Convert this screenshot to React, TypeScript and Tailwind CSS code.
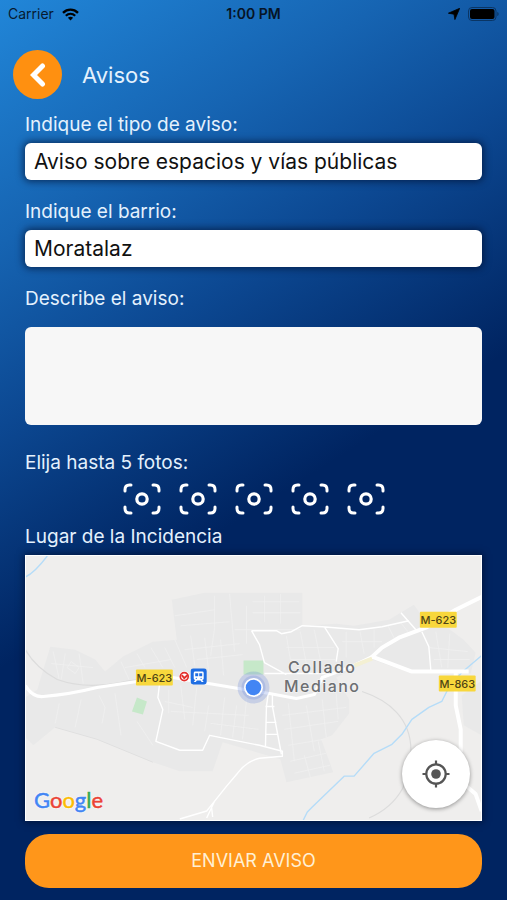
import { useState } from "react";

const photoSlots = [1, 2, 3, 4, 5];

function StatusBar() {
  return (
    <div className="grid h-7 grid-cols-3 items-center px-2 text-sm text-[#071a30]">
      <div className="flex items-center gap-2">
        <span>Carrier</span>
        <svg width="17" height="13" viewBox="0 0 17 13" fill="none" stroke="#000" aria-hidden="true">
          <path d="M1 4.8C5.4 0.6 11.6 0.6 16 4.8" strokeWidth="2.4" />
          <path d="M3.8 7.8C6.6 5.2 10.4 5.2 13.2 7.8" strokeWidth="2.2" />
          <path d="M8.5 12.4L5.9 9.8C7.4 8.5 9.6 8.5 11.1 9.8Z" fill="#000" stroke="none" />
        </svg>
      </div>
      <span className="text-center font-semibold text-[#061426]">1:00 PM</span>
      <div className="flex items-center justify-end gap-2">
        <svg width="12" height="12" viewBox="0 0 12 12" fill="#000" aria-hidden="true">
          <path d="M11.7 0.3L6.9 11.6L6 6.2L0.4 5.2Z" stroke="#000" strokeWidth="0.8" strokeLinejoin="round" />
        </svg>
        <svg width="31" height="14" viewBox="0 0 31 14" aria-hidden="true">
          <rect x="0.5" y="0.5" width="27.5" height="13" rx="3.5" fill="none" stroke="#0a3564" />
          <rect x="2" y="2" width="24.5" height="10" rx="2" fill="#000" />
          <path d="M29.3 5v4c0.9-0.3 1.3-1.1 1.3-2s-0.4-1.7-1.3-2z" fill="#0a3564" />
        </svg>
      </div>
    </div>
  );
}

function PhotoIcon() {
  return (
    <svg width="38" height="32" viewBox="0 0 38 32" fill="none" stroke="#fff" strokeWidth="3" strokeLinecap="round" aria-hidden="true">
      <path d="M2 8V6.5Q2 2 6.5 2H8" />
      <path d="M30 2H31.500Q36 2 36 6.500V8" />
      <path d="M36 24V25.500Q36 30 31.500 30H30" />
      <path d="M8 30H6.500Q2 30 2 25.500V24" />
      <circle cx="19" cy="16" r="5.200" strokeWidth="3.200" />
    </svg>
  );
}

function RoadBadge({ x, y, name }: { x: number; y: number; name: string }) {
  return (
    <g>
      <rect x={x} y={y} width="37" height="16" rx="1" fill="#f8d73c" />
      <text x={x + 18.5} y={y + 12} textAnchor="middle" fontSize="11" fontWeight="500" fill="#4f4415">
        {name}
      </text>
    </g>
  );
}

function MapDrawing() {
  return (
    <svg className="block h-full w-full" viewBox="0 0 458 265" preserveAspectRatio="xMidYMid slice" fill="none">
      <rect width="458" height="265" fill="#efeeed" />
      <g fill="#e9e9e9">
        <path d="M147 44L180 37H278V70L312 68L330 70L365 64L390 49L402 66L425 73L440 84L452 97L447 118H388L348 104L312 122L325 144V158L308 180L297 184L309 217L262 227L256 204L198 187L188 216H155L128 207L72 184L30 172L8 190L0 182V142L12 134L25 91L50 94L70 104L80 116L98 101L128 86L152 84Z" />
        <path d="M438 140L458 125V180L440 170Z" />
      </g>
      <path d="M30 172L72 184L128 207" stroke="#e0e0e0" />
      <g stroke="#f0f0f0" strokeWidth="0.8">
        <path d="M150 60L190 54M156 70L205 66M190 40V72L186 100M205 38L210 96M222 50V88M150 84L162 112M166 80L170 110M180 82L184 116M196 84L199 120M160 94L215 88M172 104L218 99M240 40V66M256 38V68M228 46H275M228 57H276M210 74H276" />
        <path d="M262 80L268 116M276 76L282 108M290 74L296 104M262 92H310M266 104H311M322 76V102M336 76L340 98M350 74V92M318 86H358M364 70L370 82M376 66L384 76M412 76L418 112M426 78L424 112M406 92L444 96M410 104H446" />
        <path d="M28 96L34 124M40 98L36 124M54 98L58 128M26 108L68 112M46 106L54 112L50 118L42 112ZM96 106L104 124M112 98L120 112M126 92L138 112M100 112L146 104M140 92L150 112" />
        <path d="M34 148L30 168M56 144L50 172M74 140L80 152L77 168M90 138L96 180M112 166L128 190M144 134V158M156 130L160 164M172 132L168 170M184 150L180 176M200 142L196 180M212 150L208 182M222 144L218 184M140 146L168 152M146 156L224 160M186 168L234 174" />
        <path d="M264 148L270 206M282 150L290 196M298 144L302 182M312 138L314 164M258 160L322 152M260 174L314 166M264 190L300 184M266 206L302 198M270 218L306 210M280 200L286 222M294 186L300 216" />
      </g>
      <g stroke="#dcdcdc" strokeWidth="1.2">
        <path d="M0 94Q10 112 32 124Q60 134 95 127Q118 122 145 124" />
        <path d="M338 136C365 145 387 163 387 195C388 222 377 249 345 263" />
      </g>
      <g stroke="#b5dcf8" strokeWidth="1.4" strokeLinejoin="round">
        <path d="M0 21Q9 17 22 0" />
        <path d="M279 265L283 257L288 252L320 221H330L350 198L368 189L378 179L388 164L405 152L418 146L425 132L438 117L458 100" />
      </g>
      <path d="M219 105H239V119H219ZM112 142L122 146L118 159L107 156Z" fill="#c6e8c9" />
      <g stroke="#fff" strokeWidth="1.4" strokeLinejoin="round">
        <path d="M227 75H252L257 78L267 76L278 70L298 71L335 74L358 71L385 65M300 71L314 93L312 106M227 75L235 89L240 107L262 119M240 118H302M377 57L392 74M398 76L405 91L407 115" />
        <path d="M135 126L133 142L138 154L131 186L155 195H178L185 180L235 190L258 196V201L235 203Q222 206 213 218L202 231L190 246L182 256L155 264M190 246L182 263M187 253L188 262" />
        <path d="M244 137L242 151L241 191M248 138V151L257 199M241 151H250M241 167H252M241 179H254" />
      </g>
      <g stroke="#fff" strokeLinejoin="round">
        <path d="M0 130Q7 142 18 141Q44 139 72 132L112 126L148 122L208 132L245 138L272 143L290 139L298 122L325 112L348 101" strokeWidth="3.200" />
        <path d="M346 103L358 92L375 82L402 72L432 54L460 40M348 101L388 116H445M432 117V150L437 174V197M437 226L452 239L458 256" strokeWidth="4" />
      </g>
      <path d="M330 110L348 103" stroke="#f4f0d3" strokeWidth="4" />
      <RoadBadge x={111} y={114} name="M-623" />
      <RoadBadge x={396} y={56} name="M-623" />
      <RoadBadge x={415} y={120} name="M-863" />
      <g>
        <circle cx="159.500" cy="121" r="5.500" fill="#fff" />
        <circle cx="159.500" cy="121" r="4" stroke="#e3312e" strokeWidth="1.700" />
        <path d="M157 119.500L159.500 122.500L163 119.500" stroke="#e3312e" strokeWidth="2" />
        <rect x="166" y="113" width="16" height="16" rx="2.500" fill="#1f6ee3" />
        <path d="M170.500 116H177.500Q179 116 179 117.500V123Q179 124.500 177.500 124.500L179 126.500H177L175.800 125H172.200L171 126.500H169L170.500 124.500Q169 124.500 169 123V117.500Q169 116 170.500 116Z" fill="#fff" />
        <path d="M170.500 117.800H173.500V120.800H170.500ZM174.500 117.800H177.500V120.800H174.500Z" fill="#1f6ee3" />
        <circle cx="171.600" cy="122.800" r="0.700" fill="#1f6ee3" />
        <circle cx="176.400" cy="122.800" r="0.700" fill="#1f6ee3" />
      </g>
      <circle cx="229" cy="132" r="16" fill="#4d74d6" fillOpacity="0.220" />
      <circle cx="229" cy="132" r="12" fill="#4d74d6" fillOpacity="0.200" />
      <circle cx="229" cy="132" r="9.500" fill="#fff" />
      <circle cx="229" cy="132" r="7.800" fill="#4285f4" />
      <g fontSize="16" fontWeight="500" fill="#6d6f72" stroke="#f3f3f3" strokeWidth="1.500" paintOrder="stroke" textAnchor="middle" className="tracking-[1.5px]">
        <text x="298" y="117">Collado</text>
        <text x="298" y="137">Mediano</text>
      </g>
    </svg>
  );
}

function GoogleMark() {
  return (
    <span className="absolute bottom-1 left-2 font-['Lato',sans-serif] text-[22px] leading-8 [-webkit-text-stroke:0.5px_currentColor] [text-shadow:0_0_2px_#fff,0_0_2px_#fff]">
      <span className="text-[#4285f4] [-webkit-text-stroke-color:#4285f4]">G</span>
      <span className="text-[#ea4335] [-webkit-text-stroke-color:#ea4335]">o</span>
      <span className="text-[#fbbc05] [-webkit-text-stroke-color:#fbbc05]">o</span>
      <span className="text-[#4285f4] [-webkit-text-stroke-color:#4285f4]">g</span>
      <span className="text-[#34a853] [-webkit-text-stroke-color:#34a853]">l</span>
      <span className="text-[#ea4335] [-webkit-text-stroke-color:#ea4335]">e</span>
    </span>
  );
}

export default function App() {
  const [description, setDescription] = useState("");
  return (
    <div className="min-h-screen bg-[linear-gradient(148deg,#2186d8_0%,#1664b2_20%,#0c4892_35%,#002461_55%)] pb-3 font-['Inter','Liberation_Sans',sans-serif] text-[#e4f1fd]">
      <StatusBar />
      <header className="mt-[22px] flex items-center gap-5 px-[13px]">
        <button type="button" aria-label="Volver" className="flex size-[49px] items-center justify-center rounded-full bg-[#ff9010]">
          <svg width="16" height="24" viewBox="0 0 16 24" fill="none" stroke="#fff" strokeWidth="5" strokeLinecap="round" aria-hidden="true">
            <path d="M12.500 3L3.500 12L12.500 21" strokeLinejoin="miter" />
          </svg>
        </button>
        <h1 className="text-[22px] leading-6">Avisos</h1>
      </header>
      <form className="flex flex-col px-[25px] pt-[14px]" onSubmit={(e) => e.preventDefault()}>
        <label htmlFor="tipo" className="text-[19px] leading-6">Indique el tipo de aviso:</label>
        <select id="tipo" className="mt-[6px] h-[37px] appearance-none rounded-md bg-white px-[9px] text-[21px] text-[#111] shadow-[0_0_7px_2px_rgba(0,15,45,0.6)]">
          <option>Aviso sobre espacios y vías públicas</option>
        </select>
        <label htmlFor="barrio" className="mt-5 text-[19px] leading-6">Indique el barrio:</label>
        <select id="barrio" className="mt-[6px] h-[37px] appearance-none rounded-md bg-white px-[9px] text-[21px] text-[#111] shadow-[0_0_7px_2px_rgba(0,15,45,0.6)]">
          <option>Moratalaz</option>
        </select>
        <label htmlFor="descripcion" className="mt-5 text-[19px] leading-6">Describe el aviso:</label>
        <textarea
          id="descripcion"
          value={description}
          onChange={(e) => setDescription(e.target.value)}
          className="mt-4 h-[98px] resize-none rounded-md bg-[#f7f7f7] p-2 text-[19px] text-[#111]"
        />
        <p className="mt-[26px] text-[19px] leading-6">Elija hasta 5 fotos:</p>
        <div className="mt-2 flex justify-center">
          {photoSlots.map((slot) => (
            <button key={slot} type="button" aria-label={`Foto ${slot}`} className="flex h-8 w-14 items-center justify-center">
              <PhotoIcon />
            </button>
          ))}
        </div>
        <h2 className="mt-[10px] text-[19px] leading-6">Lugar de la Incidencia</h2>
        <div className="relative mt-[6px] h-[266px] overflow-hidden border border-white shadow-[0_0_7px_1px_rgba(0,8,30,0.6)]">
          <MapDrawing />
          <GoogleMark />
          <button type="button" aria-label="Mi ubicación" className="absolute right-[11px] bottom-3 flex size-[68px] items-center justify-center rounded-full bg-white shadow-[0_1px_4px_rgba(0,0,0,0.4)]">
            <svg width="28" height="28" viewBox="0 0 28 28" fill="none" stroke="#555" strokeWidth="2.200" aria-hidden="true">
              <circle cx="14" cy="14" r="9.700" />
              <circle cx="14" cy="14" r="4.800" fill="#555" stroke="none" />
              <path d="M14 0.500V5M14 23V27.500M0.500 14H5M23 14H27.500" />
            </svg>
          </button>
        </div>
        <button type="submit" className="mt-[13px] h-[54px] rounded-3xl bg-[#ff961a] text-lg text-[#fff0d4]">ENVIAR AVISO</button>
      </form>
    </div>
  );
}
